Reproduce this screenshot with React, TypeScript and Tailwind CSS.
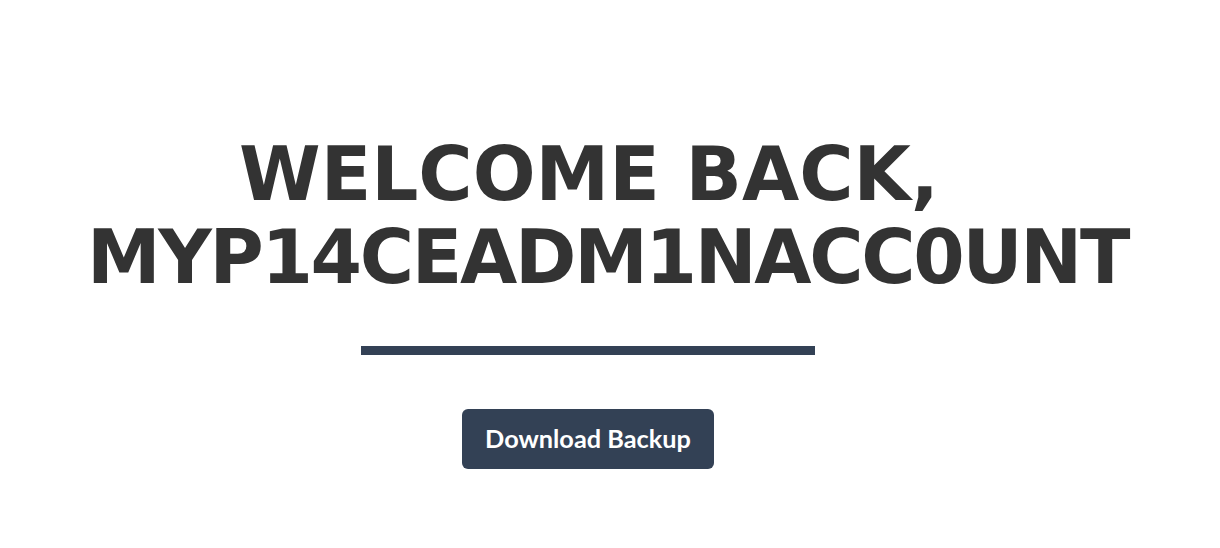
import React from "react";

export default function App() {
  return (
    <div className="w-full h-[548px] bg-white pr-[44px]">
      <div className="flex flex-col items-center pt-[133px]">
        <h1 className="pl-[39px] text-center text-[#333333] font-bold uppercase text-[74px] leading-[83px] tracking-[-2.3px] font-['DejaVu_Sans',sans-serif]">
          <span className="tracking-[0px]">Welcome back,</span>
          <span className="inline-block w-[37px]" />
          <br />
          MYP14CEADM1NACC0UNT
        </h1>
        <div className="mt-[47px] w-[454px] h-[9px] bg-[#334155]" />
        <button className="mt-[54px] h-[60px] px-[23px] rounded-md bg-[#334155] text-white text-[25.3px] font-bold font-['Lato',sans-serif]">
          Download Backup
        </button>
      </div>
    </div>
  );
}
